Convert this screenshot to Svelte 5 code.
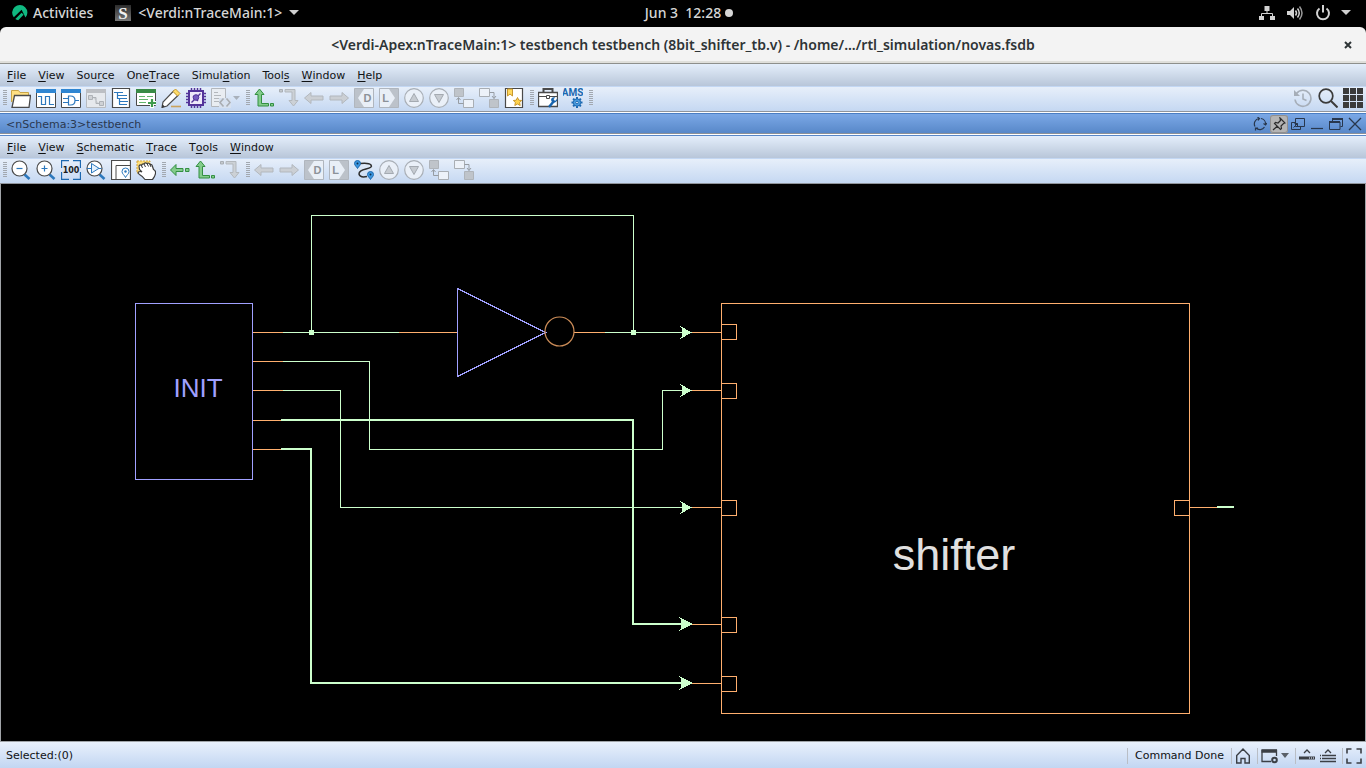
<script>
  const arrowUp = (line, fill) =>
    `<path d="M5.500 1 10 6.500H7.500V15.500H14.500V18H4V6.500H1Z" fill="${fill}" stroke="${line}"/><path d="M16.500 15.500h3V18h-3z" fill="${fill}" stroke="${line}"/>`;

  const sheet = (top, edge) =>
    `<path d="M.5 3.500h19v16H.5z" fill="#fff" stroke="${edge}"/><path d="M0 1h20v4H0z" fill="${top}"/>`;

  const lens =
    '<path d="M13.500 14.500 18.500 19" stroke="#2c78bd" stroke-width="2.600"/><circle cx="8.500" cy="8.500" r="7.500" fill="#fff" stroke="#4a4a4a" stroke-width="1.200"/>';

  const toothed = Array.from(
    { length: 8 },
    (_, i) => `<path d="M14 9v2" stroke="#1c68b0" stroke-width="2" transform="rotate(${i * 45} 14 14.500)"/>`
  ).join('');

  const pin = (x, y) =>
    `<path d="M${x} ${y + 8}c-1-2-3-3-3-5a3 3 0 0 1 6 0c0 2-2 3-3 5z" fill="#3a96e0" stroke="#1f69ad"/><circle cx="${x}" cy="${y + 3}" r="1" fill="#10304d"/>`;

  const icons = {
    open: '<path d="M.5 14V2.500h7l1.500 2h8.500V8" fill="#ffe083" stroke="#c9a548"/><path d="M3.500 7.500h16l-1.500 12H1z" fill="#fff" stroke="#4a4a4a" stroke-width="1.300"/>',
    wave: sheet('#2f86d2', '#4a4a4a') + '<path d="M2 8.500h3.500v8h4v-8h4v8H18" fill="none" stroke="#2c78bd" stroke-width="1.200"/>',
    gate: sheet('#2f86d2', '#4a4a4a') + '<path d="M7.500 8v9h2q4.500 0 4.500-4.500T9.500 8zM2 10.500h5M2 14.500h5M14 12.500h4" fill="none" stroke="#2c78bd" stroke-width="1.200"/>',
    flow: '<path d="M.5 3.500h19v16H.5z" fill="#e6e9ed" stroke="#b8bcc1"/><path d="M0 1h20v4H0z" fill="#bcbfc4"/><path d="M2.500 7.500h4v4h-4zM13.500 13.500h4v4h-4zM6.500 9.500H10v6h3.500" fill="#cfd2d6" stroke="#aeb2b7"/>',
    list: '<path d="M1.500.5h17v19h-17z" fill="#fff" stroke="#4a4a4a" stroke-width="1.200"/><path d="M3 4.500h9M6 7.500h10M6 10.500h10M8 13.500h9M8 16.500h8M6.500 4.500v6h2v6" fill="none" stroke="#2c78bd" stroke-width="1.200"/>',
    addsheet: '<path d="M.5 3.500h19v14H.5z" fill="#fff" stroke="#4a4a4a"/><path d="M0 1h20v4H0z" fill="#388b46"/><path d="M3 8.500h6M11 8.500h6M3 11.500h9M3 14.500h7" stroke="#63b56d"/><path d="M16 10v10M11 15h10" stroke="#fff" stroke-width="4"/><path d="M16 11v8M12 15h8" stroke="#3f9b4d" stroke-width="2.200"/>',
    pencil: '<path d="M12.500 3 17 7.500 6 18l-5 1.500L2 14z" fill="#fff" stroke="#4a4a4a" stroke-width="1.200"/><path d="m12 3.500 2.500-2.500 4.500 4.500L16.500 8z" fill="#ffdc68" stroke="#c59a35"/><path d="m1 19.500.500-3L4 18.500z" fill="#333"/><path d="M10 18.500h10" stroke="#c9a25c" stroke-width="1.600"/>',
    chip: '<path d="M5.500 0v4M8.500 0v4M11.500 0v4M14.500 0v4M5.500 16v4M8.500 16v4M11.500 16v4M14.500 16v4M0 5.500h4M0 8.500h4M0 11.500h4M0 14.500h4M16 5.500h4M16 8.500h4M16 11.500h4M16 14.500h4" stroke="#53349a" stroke-width="1.500"/><path d="M3 3h14v14H3z" fill="#eee9fa" stroke="#53349a" stroke-width="2"/><path d="m5.500 14.500 3-3M11.500 8.500l3-3M7 8l5 5" stroke="#53349a" stroke-width="1.400"/><circle cx="10" cy="9.500" r="2.800" fill="#765bc0" stroke="#53349a"/>',
    code: '<path d="M.5.5h14v18H.5z" fill="#e9edf2" stroke="#b3b7bc"/><path d="M3 4.500h4M3 7.500h7M3 10.500h7M3 13.500h5" stroke="#b3b7bc"/><path d="M8 10h12v10H8z" fill="#d7e1ef"/><path d="M12.500 10.500 9 14.500l3.500 4M15.500 10.500l3.500 4-3.500 4" fill="none" stroke="#a9adb2" stroke-width="1.600"/>',
    up: arrowUp('#338f42', '#83cc8b'),
    turn: '<path d="M.5 1.500h3v2.500h-3z" fill="#c4c9ce" stroke="#a9aeb4"/><path d="M6 1.500H16V12.500h3L14.500 18 10 12.500h3V4H6z" fill="#ccd1d6" stroke="#b3b8bd"/>',
    left: '<path d="M.5 10 7 4.500V8h12v4H7v3.500z" fill="#cbcfd4" stroke="#b2b7bd"/>',
    right: '<path d="M19.500 10 13 4.500V8H1v4h12v3.500z" fill="#cbcfd4" stroke="#b2b7bd"/>',
    driver: '<path d="M.5.500h19v19H.5z" fill="#bcc2ca" stroke="#b0b6be"/><path d="M10 1h9v18h-9l-6-9z" fill="#e9eff7"/><text x="13.500" y="14" font-family="Liberation Sans, sans-serif" font-size="11" font-weight="700" text-anchor="middle" fill="#8c9299">D</text>',
    load: '<path d="M.5.500h19v19H.5z" fill="#bcc2ca" stroke="#b0b6be"/><path d="M10 1H1v18h9l6-9z" fill="#e9eff7"/><text x="6.500" y="14" font-family="Liberation Sans, sans-serif" font-size="11" font-weight="700" text-anchor="middle" fill="#8c9299">L</text>',
    above: '<circle cx="10" cy="10" r="9.300" fill="#eaf0f8" stroke="#a9afb6" stroke-width="1.200"/><path d="M10 5.500 14.500 13.500h-9z" fill="#c6cbd1" stroke="#a4aab1"/>',
    below: '<circle cx="10" cy="10" r="9.300" fill="#eaf0f8" stroke="#a9afb6" stroke-width="1.200"/><path d="M10 14.500 14.500 6.500h-9z" fill="#c6cbd1" stroke="#a4aab1"/>',
    pop: '<path d="M.5.500h9v8h-9z" fill="#bfc4ca" stroke="#afb4ba"/><path d="M9.500 11.500h10v8h-10z" fill="#edf2f9" stroke="#a9aeb4"/><path d="M4.500 10v5.500h5M2.500 12l2-2.500 2 2.500" fill="none" stroke="#969ca3"/>',
    push: '<path d="M.5.500h10v8H.5z" fill="#edf2f9" stroke="#a9aeb4"/><path d="M10.500 11.500h9v8h-9z" fill="#bfc4ca" stroke="#afb4ba"/><path d="M10.500 4.500h4.500v6M13 8l2 2.500L17 8" fill="none" stroke="#969ca3"/>',
    bookmark: '<path d="M1.500.500h17v19h-17z" fill="#fff" stroke="#4a4a4a" stroke-width="1.200"/><path d="M3.500 1h5v7L6 6 3.500 8z" fill="#ffd95e" stroke="#c8982e"/><path d="m13.500 9.500 1.300 2.700 2.900.3-2.100 2 .6 3-2.700-1.500-2.700 1.500.6-3-2.100-2 2.900-.3z" fill="#ffd24a" stroke="#c8982e"/>',
    toolbox: '<path d="M5.500 4V1h9v3" fill="none" stroke="#4a4a4a" stroke-width="2"/><path d="M.5 4.500h19v14H.5z" fill="#fff" stroke="#4a4a4a" stroke-width="1.300"/><path d="M1 8.500h7M12 8.500h7M8.500 7.500h3v3h-3z" fill="#fff" stroke="#4a4a4a"/><path d="m11 19 5-6" stroke="#1763ad" stroke-width="2.500"/><path d="M19.500 10.500 17 13l-1.500-2 2-1.500q-4-1-4.500 2.500.500 3 4 2.500 2.500-1 2.500-4z" fill="#1763ad"/>',
    ams: '<text x="9.500" y="8" font-family="Roboto, sans-serif" font-size="10" font-weight="700" text-anchor="middle" fill="#1c68b0">AMS</text>' + toothed + '<circle cx="14" cy="14.500" r="3.700" fill="#4a9de0" stroke="#1c68b0"/><circle cx="14" cy="14.500" r="1.300" fill="#e4eefb" stroke="#1c68b0"/>',
    zoomout: lens + '<path d="M5.500 8.500h6" stroke="#2c78bd" stroke-width="1.200"/>',
    zoomin: lens + '<path d="M5.500 8.500h6M8.500 5.500v6" stroke="#2c78bd" stroke-width="1.200"/>',
    full: '<path d="M.5 8V.500H8M12 .500h7.500V8M19.500 12v7.500H12M8 19.500H.5V12" fill="none" stroke="#1c68b0" stroke-width="1.300"/><text x="10" y="13" font-family="DejaVu Sans, sans-serif" font-size="8" font-weight="700" text-anchor="middle" fill="#1b1b1b">100</text>',
    zoomsel: lens + '<path d="M5.500 3.500v9.500l7.500-4.700zM1 8.500h4.500M13 8.500h2.500" fill="#e4f1fd" stroke="#2c78bd"/>',
    area: '<path d="M.5.500h19v19H.5z" fill="#fff" stroke="#4a4a4a" stroke-width="1.200"/><path d="M5 19V5.500h14" fill="none" stroke="#4a4a4a"/><path d="M14.500 17.500c-1-2.500-3.500-3.500-3.500-6a3.500 3.500 0 0 1 7 0c0 2.500-2.500 3.500-3.500 6z" fill="#fff" stroke="#2c78bd"/><circle cx="14.500" cy="11.500" r="1.200" fill="#2c78bd"/>',
    hand: '<path d="M1 1h13v12H1z" fill="#ffdf7a" stroke="#d1a33c" stroke-dasharray="2 1"/><path d="M3.500 9.500 3 6q1-2 2.500-.500Q6 3.500 8 4q1-2 3-.500 2-1 3 1 2-.500 2.500 2l1 3q2.500 1 2 4-.500 3-3 6H9q-2-3-5.500-5-2-1.500-1-2.500 1.500-1 3.500 0z" fill="#fff" stroke="#3d3d3d" stroke-width="1.200"/><path d="m5.500 5.500 1 2.500M8 4l1.500 3M11 3.500l1.500 3M14 4.500l1 2.500" stroke="#3d3d3d"/>',
    back: '<path d="M.5 10 6 4.500V8.500h7v3H6v4z" fill="#83cc8b" stroke="#338f42"/><path d="M15.500 8.500h3.500v3h-3.500z" fill="#83cc8b" stroke="#338f42"/>',
    route: '<path d="M6 3.500q9-1 11 1.500t-5 4-7 5q1 4 8 2.500" fill="none" stroke="#2e2e2e" stroke-width="1.500"/>' + pin(3.5, 0.5) + pin(16.5, 11.5),
    history: '<path d="M3.500 5.500a8 8 0 1 1-1.500 6" fill="none" stroke="#a6aeb8" stroke-width="1.600"/><path d="M1 2v6h6z" fill="#a6aeb8"/><path d="M10 5.500V11l3.500 1.500" fill="none" stroke="#a6aeb8" stroke-width="1.600"/>',
    search: '<circle cx="8" cy="8" r="6.800" fill="none" stroke="#3b3b3b" stroke-width="1.700"/><path d="m13 13 6.500 6.500" stroke="#3b3b3b" stroke-width="2"/>',
    grid: '<path d="M0 0h6v6H0zM7 0h6v6H7zM14 0h6v6h-6zM0 7h6v6H0zM7 7h6v6H7zM14 7h6v6h-6zM0 14h6v6H0zM7 14h6v6H7zM14 14h6v6h-6z" fill="#3b3b3b"/>'
  };

  const mainMenu = ['_File', '_View', 'Sou_rce', 'One_Trace', 'Simul_ation', 'Tool_s', '_Window', '_Help'];
  const schemaMenu = ['_File', '_View', '_Schematic', '_Trace', 'T_ools', '_Window'];

  const mainTools = [
    ['open', 'wave', 'gate', 'flow', 'list', 'addsheet', 'pencil', 'chip', 'code', 'more'],
    ['up', 'turn', 'left', 'right', 'driver', 'load', 'above', 'below', 'pop', 'push', 'bookmark'],
    ['toolbox', 'ams'],
    []
  ];
  const schemaTools = [
    ['zoomout', 'zoomin', 'full', 'zoomsel', 'area', 'hand'],
    ['back', 'up', 'turn'],
    ['left', 'right', 'driver', 'load', 'route', 'above', 'below', 'pop', 'push']
  ];

  const inputPorts = [324, 383, 500, 617, 676];
  const leads = [
    [253, 283, 332], [253, 283, 361], [253, 283, 390], [253, 283, 420], [253, 283, 449],
    [399, 457, 332], [574, 605, 332],
    [691, 721, 332], [691, 721, 390], [691, 721, 507], [691, 721, 624], [691, 721, 683],
    [1190, 1219, 507]
  ];
</script>

{#snippet menu(items)}
  <nav class="menubar">
    {#each items as item}
      {@const [head, tail] = item.split('_')}
      <button type="button">{head}<u>{tail[0]}</u>{tail.slice(1)}</button>
    {/each}
  </nav>
{/snippet}

{#snippet tool(name)}
  {#if name === 'more'}
    <button type="button" class="more" aria-label="more"><svg width="7" height="4"><path d="M0 0h7L3.500 4z" fill="#a9b1bb" /></svg></button>
  {:else}
    <button type="button" class="tool" aria-label={name}>
      <svg width="20" height="20" viewBox="0 0 20 20" fill="none">{@html icons[name]}</svg>
    </button>
  {/if}
{/snippet}

{#snippet tools(groups)}
  {#each groups as group}
    <div class="group">
      <i class="handle"></i>
      {#each group as name}{@render tool(name)}{/each}
    </div>
  {/each}
{/snippet}

<div class="desktop">
  <header class="shell">
    <div class="shell-left">
      <button type="button" class="activities">
        <svg width="16" height="16" viewBox="0 0 16 16">
          <path d="M13.500 12.600A7.600 7.600 0 1 0 1.800 12.300L9.600 4.800z" fill="#10b981" />
          <path d="m3.300 14 6.300-6.200 2 2-5.400 5.500A7.500 7.500 0 0 1 3.300 14z" fill="#10b981" />
        </svg>
        Activities
      </button>
      <button type="button" class="app">
        <svg class="tile" width="16" height="16" viewBox="0 0 16 16">
          <defs><linearGradient id="tile" x1="0" y1="0" x2="0" y2="1"><stop offset="0" stop-color="#2c2c2c" /><stop offset="1" stop-color="#777" /></linearGradient></defs>
          <path d="M0 0h16v16H0z" fill="url(#tile)" />
          <text x="8" y="14" text-anchor="middle" font-family="Liberation Serif, serif" font-weight="700" font-size="17" fill="#f2f2f2">S</text>
        </svg>
        &lt;Verdi:nTraceMain:1&gt;
        <svg width="10" height="5"><path d="M0 0h10L5 5z" fill="#d0d0d0" /></svg>
      </button>
    </div>
    <button type="button" class="clock">Jun 3&nbsp; 12:28<i></i></button>
    <div class="shell-right">
      <svg width="16" height="16" viewBox="0 0 16 16" fill="#d3d3d3"><path d="M5.500 1h5v5h-5zM0 11h5v4H0zM11 11h5v4h-5z" /><path d="M8 6v3M2.500 11V8.500h11V11" fill="none" stroke="#d3d3d3" /></svg>
      <svg width="16" height="16" viewBox="0 0 16 16" fill="none" stroke="#d3d3d3" stroke-width="1.500"><path d="M0 6h3l4-4v12l-4-4H0z" fill="#d3d3d3" stroke="none" /><path d="M8.500 5.500q2 2.500 0 5M10.500 3.500q3.500 4.500 0 9" /><path d="M12.500 1.500q5 6.500 0 13" stroke="#999" /></svg>
      <svg width="16" height="16" viewBox="0 0 16 16" fill="none" stroke="#d3d3d3" stroke-width="2"><path d="M4.500 3.500a6 6 0 1 0 7 0M8 0v7.500" /></svg>
      <svg class="tick" width="10" height="5"><path d="M0 0h10L5 5z" fill="#d0d0d0" /></svg>
    </div>
  </header>

  <div class="titlebar">
    <h1>&lt;Verdi-Apex:nTraceMain:1&gt; testbench testbench (8bit_shifter_tb.v) - /home/.../rtl_simulation/novas.fsdb</h1>
    <button type="button" class="shut" aria-label="Close window"><svg width="8" height="8"><path d="m1 1 6 6M7 1 1 7" stroke="#2e3436" stroke-width="2" /></svg></button>
  </div>

  {@render menu(mainMenu)}
  <div class="toolbar">
    {@render tools(mainTools)}
    <div class="right-tools">
      {@render tool('history')}{@render tool('search')}{@render tool('grid')}
    </div>
  </div>

  <div class="subtitle">
    <h2>&lt;nSchema:3&gt;testbench</h2>
    <div class="frame-buttons">
      <button type="button" aria-label="Reload"><svg width="14" height="14" fill="none" stroke="#28374d" stroke-width="1.200"><path d="M2 9.500A5.500 5.500 0 0 1 6 1.500M8 1.500a5.500 5.500 0 0 1 4.500 6M11.500 10A5.500 5.500 0 0 1 3 11M4.500 0 6.500 1.500 5 3.500M14 6l-1.500 2L10.500 6.500M2.500 13.500V11H5" /></svg></button>
      <button type="button" class="pressed" aria-label="Pin"><svg width="14" height="14" fill="none" stroke="#2d2d2d" stroke-width="1.200"><path d="m8 1 5 5-1.500.500-2.500 2.500.500 2.500-1 1L2.500 6.500l1-1L6 6l2.500-2.500zM5.500 9 1 13" /></svg></button>
      <button type="button" aria-label="Undock"><svg width="14" height="14" fill="none" stroke="#28374d"><path d="M4.500 1.500h9v8h-9zM4 5.500H.500v7h9V10M2.500 10.500l4-4M3.500 6.500h3v3" /></svg></button>
      <button type="button" aria-label="Minimize"><svg width="14" height="14" stroke="#28374d" stroke-width="1.200"><path d="M1 11.500h12" /></svg></button>
      <button type="button" aria-label="Restore"><svg width="14" height="14" fill="none" stroke="#28374d"><path d="M3.500 4V2h10v7.500h-2M.5 5h10.500v7.500H.500z" /><path d="M3 2h11M0 5h11" stroke-width="2" /></svg></button>
      <button type="button" aria-label="Close"><svg width="14" height="14" stroke="#28374d" stroke-width="1.300"><path d="m1 1 12 12M13 1 1 13" /></svg></button>
    </div>
  </div>

  {@render menu(schemaMenu)}
  <div class="toolbar">{@render tools(schemaTools)}</div>

  <main>
    <svg class="schematic" shape-rendering="crispEdges" fill="none">
      <g transform="translate(-1 -184)">
        <g stroke="#ffaf6e">
          <path d="M721.500 303.500h468v410h-468z" />
          {#each inputPorts as y}<path d="M721.500 {y + 0.5}h15v15h-15z" />{/each}
          <path d="M1174.500 500.500h15v15h-15z" />
          {#each leads as [from, to, y]}<path d="M{from} {y + 0.5}H{to}" />{/each}
        </g>
        <g stroke="#ccffcc">
          <path d="M283 332.500H399M605 332.500H682M311.500 332V215.500H633.500V332" />
          <path d="M283 361.500H369.500V449.500H662.500V390.500H682" />
          <path d="M283 390.500H340.500V507.500H682" />
          <path d="M281 420H633V624H682M281 449H311V683H682M1217 507h17" stroke-width="2" />
        </g>
        <g fill="#ccffcc">
          <path d="M309 330h5v5h-5zM631 330h5v5h-5z" />
          {#each [332, 390, 507] as y}<path d="M680 {y - 6}L692 {y + 0.5}L680 {y + 7}L682 {y + 4}V{y - 3}z" />{/each}
          {#each [624, 683] as y}<path d="M679 {y - 7}L693 {y}L679 {y + 7}L681 {y + 4}V{y - 4}z" />{/each}
        </g>
        <g stroke="#a0a0ff">
          <path d="M135.500 303.500h117v176h-117z" />
          <path d="M457.500 288.500v88l88-44z" />
        </g>
        <circle cx="559.500" cy="331.500" r="14.500" stroke="#cd8d58" stroke-width="1.200" shape-rendering="auto" />
        <text x="198" y="397" font-size="26" fill="#a0a0ff">INIT</text>
        <text x="954" y="570" font-size="45" fill="#e0e0e0">shifter</text>
      </g>
    </svg>
  </main>

  <footer>
    <span class="selected">Selected:(0)</span>
    <div class="cell message"><span>Command Done</span></div>
    <div class="cell"><button type="button" aria-label="Home"><svg width="16" height="16" fill="none" stroke="#3b3f45" stroke-width="1.400"><path d="M1.700 7.500V15H6V10.500h4V15h4.300V7.500L8 1z" /></svg></button></div>
    <div class="cell">
      <button type="button" aria-label="Settings"><svg width="18" height="16" fill="none" stroke="#3b3f45" stroke-width="1.300"><path d="M15.500 8V2.500H1v11h9" /><path d="M.5 3h15.500" stroke-width="3.500" /><circle cx="13.500" cy="12" r="2.300" stroke-width="2" /></svg></button>
      <button type="button" aria-label="Settings menu"><svg width="8" height="16"><path d="M0 5h8L4 10z" fill="#5a6068" /></svg></button>
    </div>
    <div class="cell wide">
      <button type="button" aria-label="Show console"><svg width="16" height="16" fill="none" stroke="#3b3f45" stroke-width="1.300"><path d="m5 5 3-3 3 3" /><path d="M0 10h16" stroke-width="3" /><path d="M10 10h5" stroke="#b9c2cf" stroke-dasharray="1 1" /></svg></button>
      <button type="button" aria-label="Show messages"><svg width="16" height="16" fill="none" stroke="#3b3f45" stroke-width="1.300"><path d="m5 5 3-3 3 3M2 7.500h14M2 10.500h14M0 13.500h16M0 7.500h1M0 10.500h1" /></svg></button>
    </div>
    <div class="cell"><button type="button" aria-label="Full screen"><svg width="16" height="16" fill="none" stroke="#3b3f45" stroke-width="1.600"><path d="M1 5.500V1h4.500M10.500 1H15v4.500M15 10.500V15h-4.500M5.500 15H1v-4.500" /></svg></button></div>
  </footer>
</div>

<style>
  :global(body) {
    margin: 0;
    background: #000;
  }
  .desktop {
    display: flex;
    flex-direction: column;
    min-height: 100vh;
    background: #000;
    color: #101214;
    font: 11px/14px 'DejaVu Sans', sans-serif;
  }
  button {
    display: flex;
    align-items: center;
    margin: 0;
    padding: 0;
    border: 0;
    background: none;
    color: inherit;
    font: inherit;
    white-space: nowrap;
  }
  svg {
    display: block;
    flex: none;
  }
  .tile {
    overflow: visible;
  }
  h1,
  h2 {
    margin: 0;
    font: inherit;
  }

  .shell {
    display: grid;
    grid-template-columns: 1fr auto 1fr;
    align-items: center;
    height: 25px;
    padding-bottom: 2px;
    color: #d6d6d6;
    font: 500 14px/20px 'Noto Sans', sans-serif;
  }
  .shell-left,
  .shell-right {
    display: flex;
    align-items: center;
  }
  .shell-left {
    gap: 22px;
    padding-left: 12px;
  }
  .activities {
    gap: 5px;
  }
  .app {
    gap: 7px;
  }
  .clock {
    gap: 4px;
    padding-left: 12px;
  }
  .clock i {
    width: 8px;
    height: 8px;
    border-radius: 50%;
    background: #d6d6d6;
  }
  .shell-right {
    justify-content: flex-end;
    gap: 12px;
    padding-right: 15px;
  }
  .tick {
    margin-left: -2px;
  }

  .titlebar {
    display: grid;
    grid-template-columns: 1fr auto 1fr;
    align-items: center;
    height: 36px;
    padding-top: 2px;
    box-sizing: border-box;
    border-bottom: 2px solid #dfdfdb;
    border-radius: 6px 6px 0 0;
    background: #f3f3f3;
    color: #2e3436;
    font: 600 14px/20px 'Noto Sans', sans-serif;
  }
  .titlebar h1 {
    grid-column: 2;
  }
  .shut {
    justify-self: end;
    margin-right: 14px;
  }

  .menubar {
    display: flex;
    height: 22px;
    padding-left: 1px;
    border-top: 1px solid #8d8f8c;
    background: linear-gradient(#e4eefb, #b8c6d9);
  }
  .menubar button {
    padding: 2px 6px 0;
  }
  .subtitle + .menubar {
    border-top-color: #5a88c8;
  }
  u {
    text-underline-offset: 2px;
  }

  .toolbar {
    display: flex;
    align-items: center;
    height: 22px;
    padding: 0 3px 2px;
    border-top: 1px solid #c3d7f3;
    border-bottom: 1px solid #90959c;
    background: linear-gradient(#e7effa, #c5d8f2);
  }
  .group {
    display: flex;
    align-items: center;
    gap: 5px;
    margin-right: 6px;
  }
  .handle {
    width: 4px;
    height: 16px;
    margin-right: -1px;
    background: repeating-linear-gradient(#a2a8b0 0 1px, transparent 1px 2px);
  }
  .more {
    width: 7px;
    margin-left: -3px;
  }
  .right-tools {
    display: flex;
    gap: 5px;
    margin-left: auto;
  }

  .subtitle {
    display: flex;
    align-items: center;
    justify-content: space-between;
    height: 19px;
    padding: 0 4px 0 6px;
    border-top: 1px solid #4a7ec4;
    border-bottom: 1px solid #8b9098;
    background: linear-gradient(#7ba8e6, #5888c9);
    margin: 1px 0;
    box-shadow: 0 0 0 1px #fff;
    color: #2a3850;
  }
  .subtitle h2 {
    padding-top: 2px;
  }
  .frame-buttons {
    display: flex;
    align-items: center;
    gap: 5px;
  }
  .pressed {
    padding: 2px;
    margin: 0 -2px;
    border-radius: 3px;
    background: #b4b4b4;
    box-shadow: inset 0 0 0 1px #8f8f8f;
  }

  main {
    display: flex;
    flex: 1;
    border: solid #a0a4a8;
    border-width: 0 1px 1px;
  }
  .schematic {
    flex: 1;
    min-width: 0;
    min-height: 540px;
    font-family: 'Liberation Sans', sans-serif;
    text-anchor: middle;
  }

  footer {
    display: flex;
    align-items: center;
    height: 24px;
    padding: 2px 4px 0 0;
    background: linear-gradient(#e9f1fc, #c2d6f2);
  }
  .selected {
    flex: 1;
    padding-left: 6px;
  }
  .cell {
    display: flex;
    align-items: center;
    gap: 2px;
    height: 16px;
    padding: 0 6px 0 3px;
    border-left: 1px solid #b9bec6;
  }
  .cell:last-child {
    padding-right: 0;
  }
  .message {
    padding: 0 7px;
  }
  .wide {
    gap: 5px;
  }
</style>
